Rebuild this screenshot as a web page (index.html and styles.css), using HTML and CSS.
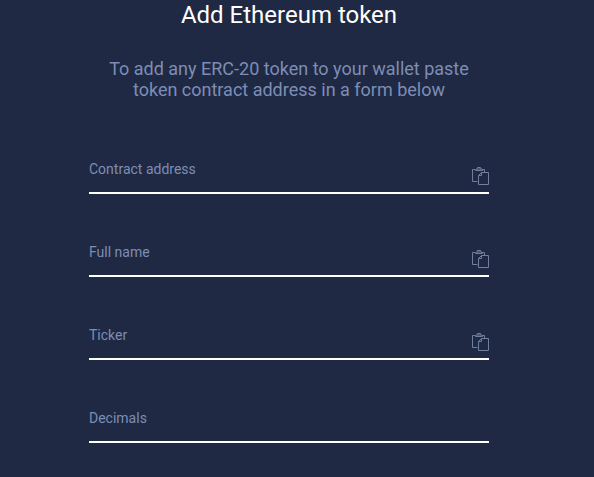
FILE: index.html
```html
<!DOCTYPE html>
<html lang="en">
<head>
<meta charset="UTF-8" />
<meta name="viewport" content="width=device-width, initial-scale=1" />
<title>Add Ethereum token</title>
<link rel="stylesheet" href="styles.css">
</head>
<body>

<svg class="sprite" width="0" height="0" aria-hidden="true">
  <symbol id="paste" viewBox="0 0 18 18">
    <path d="M6.500 14.500H1.500v-12h3M11 2.500h2.500v3M4.500 3.500h7l-1-1.500h-5zM6 2l.5-1.500h3l.5 1.500M10.500 5.500h7v12h-10v-9l3-3v3h-3" />
  </symbol>
</svg>

<main class="token-form">
  <h1>Add Ethereum token</h1>
  <p class="subtitle">To add any ERC-20 token to your wallet paste<br>token contract address in a form below</p>

  <form>
    <div class="field">
      <label for="address">Contract address</label>
      <input type="text" id="address" autocomplete="off" />
      <button type="button" class="paste" aria-label="Paste"><svg><use href="#paste" /></svg></button>
    </div>
    <div class="field">
      <label for="name">Full name</label>
      <input type="text" id="name" autocomplete="off" />
      <button type="button" class="paste" aria-label="Paste"><svg><use href="#paste" /></svg></button>
    </div>
    <div class="field">
      <label for="ticker">Ticker</label>
      <input type="text" id="ticker" autocomplete="off" />
      <button type="button" class="paste" aria-label="Paste"><svg><use href="#paste" /></svg></button>
    </div>
    <div class="field">
      <label for="decimals">Decimals</label>
      <input type="text" id="decimals" autocomplete="off" />
    </div>
  </form>
</main>

</body>
</html>
```
FILE: styles.css
```css
* {
  box-sizing: border-box;
}
body {
  margin: 0;
  height: 100vh;
  overflow: hidden;
  background: #1f2943;
  font-family: Roboto, sans-serif;
  color: #fff;
}
.sprite {
  display: none;
}
.token-form {
  width: 400px;
  margin-left: 89px;
}
h1 {
  margin: 0;
  font-size: 24px;
  font-weight: 400;
  line-height: 30px;
  text-align: center;
}
.subtitle {
  margin: 28px 0 54px;
  font-size: 18px;
  line-height: 21px;
  color: #7d8db5;
  text-align: center;
}
.field {
  display: flex;
  align-items: flex-start;
  height: 40px;
  margin-bottom: 43px;
  border-bottom: 2px solid #fff;
}
label {
  padding-top: 7px;
  font-size: 14px;
  line-height: 17px;
  color: #7d8db5;
}
input {
  flex: 1;
  min-width: 0;
  height: 38px;
  padding: 0 8px;
  border: none;
  outline: none;
  background: none;
  color: #fff;
  font: inherit;
}
.paste {
  margin-top: 13px;
  padding: 0;
  border: none;
  background: none;
  cursor: pointer;
}
.paste svg {
  display: block;
  width: 18px;
  height: 18px;
  fill: none;
  stroke: #717f9f;
}
```
